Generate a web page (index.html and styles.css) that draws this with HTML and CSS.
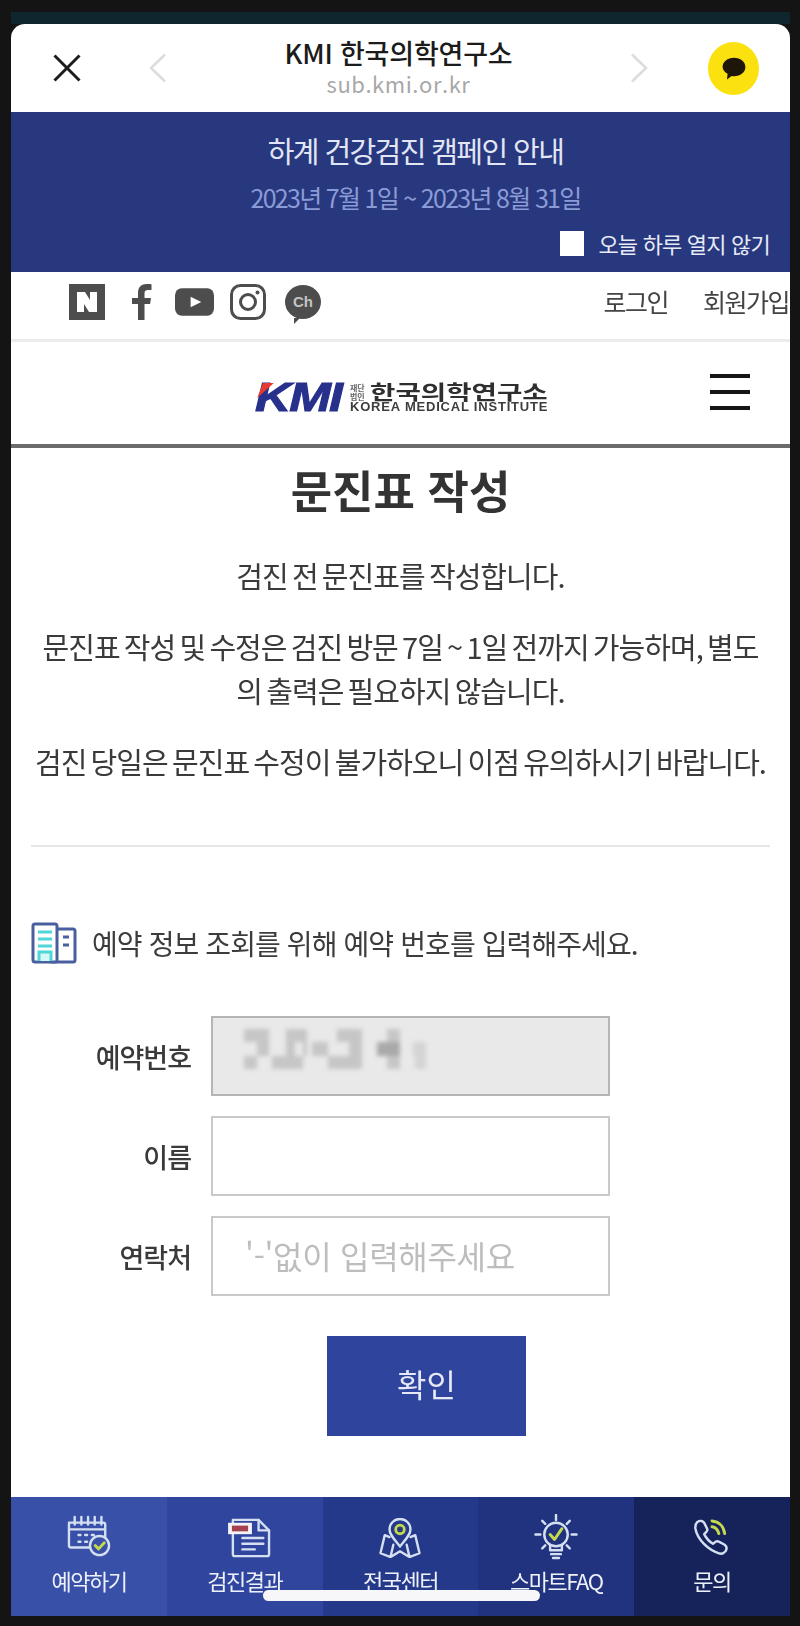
FILE: index.html
```html
<!DOCTYPE html>
<html lang="ko">
<head>
<meta charset="utf-8">
<title>문진표 작성</title>
<link rel="stylesheet" href="styles.css">
</head>
<body>
<div class="peek"></div>
<div class="sheet">
  <header class="browser">
    <svg class="ic-close" viewBox="0 0 28 28"><path d="M1.500 1.500 26.500 26.500M26.500 1.500 1.500 26.500"/></svg>
    <svg class="ic-chev" viewBox="0 0 18 30"><path d="M16 1.500 2 15l14 13.500"/></svg>
    <div class="browser-title">
      <div class="site">KMI 한국의학연구소</div>
      <div class="host">sub.kmi.or.kr</div>
    </div>
    <svg class="ic-chev" viewBox="0 0 18 30"><path d="M2 1.500 16 15 2 28.500"/></svg>
    <div class="kakao">
      <svg viewBox="0 0 24 24"><path d="M12 2.500c6 0 10.500 3.700 10.500 8.500S18 19.500 12 19.500c-.8 0-1.500 0-2.200-.2L5.500 22.500l.6-5.200C3.300 15.700 1.500 13.500 1.500 11 1.500 6.200 6 2.500 12 2.500Z"/></svg>
    </div>
  </header>

  <section class="notice">
    <div class="notice-title">하계 건강검진 캠페인 안내</div>
    <div class="notice-date">2023년 7월 1일 ~ 2023년 8월 31일</div>
    <label class="notice-skip"><span class="check"></span>오늘 하루 열지 않기</label>
  </section>

  <div class="util">
    <div class="socials">
      <svg class="s-n" viewBox="0 0 36 36"><rect width="36" height="36" fill="#4d4d4d"/><path d="M8 8h8l5 8V8h7v20h-8l-5-8v8H8Z" fill="#fff"/></svg>
      <svg class="s-f" viewBox="0 0 20 36"><path d="M6 36V20H0v-6h6V9c0-6 3.500-9 8.500-9 2.500 0 4.500.2 5 .3v5.700h-3.500c-2.800 0-3.500 1.300-3.500 3.400V14h6.500l-.9 6h-5.600v16Z" fill="#4d4d4d"/></svg>
      <svg class="s-y" viewBox="0 0 40 28"><rect width="40" height="28" rx="7" fill="#4d4d4d"/><path d="M16 8.500 27 14l-11 5.500Z" fill="#fff"/></svg>
      <svg class="s-i" viewBox="0 0 36 36"><rect x="1.500" y="1.500" width="33" height="33" rx="9" fill="none" stroke="#4d4d4d" stroke-width="3"/><circle cx="18" cy="18" r="7.500" fill="none" stroke="#4d4d4d" stroke-width="3"/><circle cx="27.500" cy="8.500" r="2" fill="#4d4d4d"/></svg>
      <div class="s-ch"><span>Ch</span></div>
    </div>
    <nav class="util-links"><span>로그인</span><span>회원가입</span></nav>
  </div>

  <div class="brand">
    <div class="logo">
      <div class="logo-mark"><span class="logo-kmi">KMI</span><svg viewBox="0 0 20 18"><path d="M7 0h13L0 18Z"/></svg></div>
      <div class="logo-text">
        <div class="logo-kr"><span class="logo-tiny">재단<br>법인</span><span class="logo-name">한국의학연구소</span></div>
        <div class="logo-en">KOREA MEDICAL INSTITUTE</div>
      </div>
    </div>
    <div class="burger"><i></i><i></i><i></i></div>
  </div>

  <main class="content">
    <h1>문진표 작성</h1>
    <p class="lead">검진 전 문진표를 작성합니다.</p>
    <p class="lead lead-gap">문진표 작성 및 수정은 검진 방문 7일 ~ 1일 전까지 가능하며, 별도<br>의 출력은 필요하지 않습니다.</p>
    <p class="lead lead-gap">검진 당일은 문진표 수정이 불가하오니 이점 유의하시기 바랍니다.</p>
    <hr>
    <div class="prompt">
      <svg viewBox="0 0 46 42"><rect x="19" y="7" width="25" height="33" rx="2" fill="#fff" stroke="#4a5f9e" stroke-width="3"/><rect x="2" y="2" width="24" height="38" rx="2" fill="#fff" stroke="#4a5f9e" stroke-width="3"/><path d="M7 10h14M7 17h14M7 24h14" stroke="#4fd6d6" stroke-width="3"/><path d="M8 39V30h12v9" fill="#d6f7f7" stroke="#4fd6d6" stroke-width="3"/><path d="M32 15h6M32 23h6" stroke="#4a5f9e" stroke-width="3"/></svg>
      <span>예약 정보 조회를 위해 예약 번호를 입력해주세요.</span>
    </div>
    <form class="form">
      <div class="row"><label>예약번호</label>
        <div class="field field-off">
          <svg class="mosaic" viewBox="0 0 184 40"><g fill="#c6c6c6"><rect x="0" y="0" width="25" height="13"/><rect x="42" y="0" width="21" height="13"/><rect x="93" y="0" width="25" height="13"/><rect x="143" y="0" width="13" height="13"/><rect x="13" y="13" width="12" height="14"/><rect x="42" y="13" width="9" height="14"/><rect x="59" y="13" width="4" height="14"/><rect x="68" y="13" width="16" height="14"/><rect x="105" y="13" width="13" height="14"/><rect x="133" y="13" width="23" height="14" fill="#a9a9a9"/><rect x="169" y="13" width="13" height="14" fill="#d4d4d4"/><rect x="0" y="27" width="13" height="13"/><rect x="28" y="27" width="31" height="13"/><rect x="84" y="27" width="34" height="13"/><rect x="143" y="27" width="13" height="13"/><rect x="171" y="27" width="11" height="13" fill="#d4d4d4"/></g></svg>
        </div>
      </div>
      <div class="row"><label>이름</label><div class="field"></div></div>
      <div class="row"><label>연락처</label><div class="field field-hint">'-'없이 입력해주세요</div></div>
      <button type="button" class="confirm">확인</button>
    </form>
  </main>

  <nav class="dock">
    <a class="dock-item d1">
      <svg viewBox="0 0 46 44"><path d="M2 8h36a2 2 0 0 1 2 2v22a2 2 0 0 1-2 2H4a2 2 0 0 1-2-2V10a2 2 0 0 1 2-2ZM2 15h38" class="ln"/><path d="M8 2v8M15 2v8M22 2v8M29 2v8M36 2v8" class="ln"/><path d="M12 21h2M19 21h2M26 21h2M12 28h2M19 28h2" class="ln"/><circle cx="34" cy="32" r="10" fill="#3850a8" stroke="#d5dff2" stroke-width="2.500"/><path d="m29.500 32 3.500 3.500 6-6.500" class="ok"/></svg>
      <span>예약하기</span>
    </a>
    <a class="dock-item d2">
      <svg viewBox="0 0 46 42"><path d="M5 2h27l11 11v25a2 2 0 0 1-2 2H7a2 2 0 0 1-2-2Z" class="ln"/><path d="M32 2v11h11M15 21h22M15 27h22M15 33h13" class="ln"/><rect x="0" y="5" width="25" height="12" fill="#f4f4f8"/><rect x="4" y="8" width="17" height="6" fill="#a5404f"/></svg>
      <span>검진결과</span>
    </a>
    <a class="dock-item d3">
      <svg viewBox="0 0 44 42"><path d="M22 30C15 21 11 17 11 12a11 11 0 0 1 22 0c0 5-4 9-11 18Z" class="ln"/><circle cx="22" cy="12" r="4.500" class="ok"/><path d="M11 20 6 18 1.500 37 12 41l10-6 10 6 10.500-4L38 18l-5 2M12 41l3-13M32 41l-3-13" class="ln"/></svg>
      <span>전국센터</span>
    </a>
    <a class="dock-item d4">
      <svg viewBox="0 0 44 48"><circle cx="22" cy="21" r="12" class="ln"/><path d="M16 32v5h12v-5M17 41h10M19 45h6M22 1v5M8 7l3 3M36 7l-3 3M1 21h5M38 21h5M8 35l3-3M36 35l-3-3" class="ln"/><path d="m16 21 4.500 5L28 15" class="ok"/></svg>
      <span>스마트FAQ</span>
    </a>
    <a class="dock-item d5">
      <svg viewBox="0 0 36 38"><path d="M3 3c3-2 6-1 7 1l3 6c.6 1.300 0 2.500-1 3.500l-2 2c2 4 5 7.500 9 10l2.500-2c1-.8 2.300-1 3.500-.3l6 3.300c2 1.500 2.500 4 1 6.500-1.500 2-3.500 3-6 2.500C14 32 3 21 1 10 .6 7 1 5 3 3Z" class="ln"/><path d="M18 2c7 .5 12 5.500 13 13M18 8c3.500.5 6 3 7 7" class="ok"/></svg>
      <span>문의</span>
    </a>
    <div class="home-bar"></div>
  </nav>
</div>
</body>
</html>
```
FILE: styles.css
```css
* { box-sizing: border-box; }
html, body { margin: 0; height: 100%; }
body {
  background: #141414;
  padding: 12px 10px 10px 11px;
  font-family: "Noto Sans CJK KR", "Noto Sans", sans-serif;
  color: #333;
  overflow: hidden;
}
.peek { height: 12px; background: #10262f; }
.sheet {
  height: 1592px;
  background: #fff;
  border-radius: 14px 14px 0 0;
  overflow: hidden;
  display: flex;
  flex-direction: column;
  filter: blur(0.7px);
}

/* in-app browser bar */
.browser {
  height: 88px;
  flex: none;
  display: flex;
  align-items: center;
  position: relative;
  padding: 0 31px 0 42px;
}
.ic-close { width: 28px; height: 28px; flex: none; margin-top: -1px; }
.ic-close path { fill: none; stroke: #1c1c1c; stroke-width: 3; }
.ic-chev { width: 18px; height: 30px; flex: none; }
.ic-chev path { fill: none; stroke: #dcdcdc; stroke-width: 2.500; }
.browser > .ic-chev:nth-of-type(2) { margin-left: 68px; }
.browser-title {
  flex: 1;
  text-align: center;
  margin-top: -3px;
}
.site { font-size: 27px; line-height: 33px; font-weight: 500; color: #1b1b1b; letter-spacing: -0.200px; white-space: nowrap; }
.host { font-size: 22px; line-height: 28px; color: #a8a8a8; letter-spacing: 0.550px; }
.kakao {
  width: 51px; height: 53px;
  border-radius: 50%;
  background: #fbe10f;
  margin-left: 60px;
  flex: none;
  display: flex;
  align-items: center;
  justify-content: center;
}
.kakao svg { width: 26px; height: 26px; fill: #1e1608; }

/* campaign notice */
.notice {
  height: 160px;
  flex: none;
  background: #27387f;
  text-align: center;
  padding-top: 16px;
  display: flex;
  flex-direction: column;
}
.notice-title { font-size: 29px; line-height: 44px; padding-left: 30px; color: #e2e6f4; letter-spacing: -1.600px; }
.notice-date { font-size: 25px; line-height: 36px; margin-top: 7px; padding-left: 30px; color: #8b9bd6; letter-spacing: -1.700px; }
.notice-skip {
  display: flex;
  justify-content: flex-end;
  align-items: center;
  gap: 14px;
  margin-top: 15px;
  padding-right: 20px;
  font-size: 22px;
  line-height: 26px;
  color: #e8ebf6;
  letter-spacing: -0.800px;
}
.check { width: 24px; height: 25px; background: #fff; flex: none; }

/* social + login */
.util {
  height: 70px;
  flex: none;
  border-bottom: 3px solid #ececec;
  display: flex;
  justify-content: space-between;
  align-items: center;
  padding-left: 58px;
}
.socials { display: flex; align-items: center; margin-top: -8px; }
.socials svg, .s-ch { flex: none; }
.s-n { width: 36px; height: 36px; }
.s-f { width: 20px; height: 36px; margin-left: 27px; }
.s-y { width: 39px; height: 28px; margin-left: 23px; }
.s-i { width: 36px; height: 36px; margin-left: 16px; }
.s-ch {
  width: 36px; height: 34px;
  margin-left: 19px;
  border-radius: 50%;
  background: #4d4d4d;
  color: #c4c4c4;
  font: 700 15px/34px "Liberation Sans", sans-serif;
  text-align: center;
  position: relative;
}
.s-ch::after {
  content: "";
  position: absolute;
  left: 9px; bottom: -5px;
  border-left: 6px solid #4d4d4d;
  border-right: 3px solid transparent;
  border-bottom: 6px solid transparent;
}
.util-links {
  display: flex;
  gap: 35px;
  margin-top: -10px;
  padding-right: 1px;
  font-size: 25px;
  color: #444;
  letter-spacing: -1.500px;
  white-space: nowrap;
}

/* logo row */
.brand {
  height: 106px;
  flex: none;
  border-bottom: 4px solid #6b6b6b;
  position: relative;
  display: flex;
  align-items: center;
  justify-content: flex-end;
  padding-right: 40px;
}
.logo {
  position: absolute;
  left: 244px;
  top: 40px;
  display: flex;
  gap: 5px;
  align-items: flex-start;
}
.logo-mark {
  position: relative;
  width: 90px;
  height: 30px;
  flex: none;
}
.logo-kmi {
  display: block;
  font: italic 700 40px/30px "Liberation Sans", sans-serif;
  color: #27318c;
  letter-spacing: -1.500px;
  transform: scaleX(1.250);
  transform-origin: left center;
  -webkit-text-stroke: 1px #27318c;
}
.logo-mark svg {
  position: absolute;
  left: 2px;
  top: 1px;
  width: 17px;
  height: 15px;
  fill: #e8392f;
}
.logo-text { width: 198px; display: flex; flex-direction: column; }
.logo-kr {
  display: flex;
  align-items: center;
  height: 19px;
  white-space: nowrap;
}
.logo-name {
  display: block;
  width: 178px;
  font-size: 20px;
  line-height: 19px;
  font-weight: 700;
  color: #2f2f2f;
  letter-spacing: 0;
  transform: scaleX(1.380);
  transform-origin: left center;
}
.logo-tiny { width: 20px; flex: none; font-size: 8px; line-height: 9px; font-weight: 700; color: #666; }
.logo-en {
  font: 700 13px/12px "Liberation Sans", sans-serif;
  color: #3d3d3d;
  letter-spacing: 0.800px;
  white-space: nowrap;
}
.burger { display: flex; flex-direction: column; gap: 12px; margin-top: -2px; }
.burger i { display: block; width: 40px; height: 4px; background: #161616; }

/* main */
.content { flex: 1; padding: 0 20px; min-height: 0; }
h1 {
  margin: 13px 0 0;
  font-size: 45px;
  line-height: 58px;
  font-weight: 700;
  text-align: center;
  color: #333;
  letter-spacing: 0;
}
.lead {
  margin: 34px 0 0;
  font-size: 29px;
  line-height: 44px;
  text-align: center;
  color: #3a3a3a;
  letter-spacing: -0.950px;
  word-spacing: -3px;
  white-space: nowrap;
}
.lead-gap { margin-top: 27px; }
hr {
  border: 0;
  height: 2px;
  background: #e6e6e6;
  margin: 62px 0 0;
}
.prompt {
  display: flex;
  align-items: center;
  gap: 15px;
  margin-top: 75px;
  font-size: 28px;
  line-height: 42px;
  color: #3c3c3c;
  letter-spacing: -0.900px;
  white-space: nowrap;
}
.prompt svg { width: 46px; height: 42px; flex: none; }
.form { margin-top: 52px; display: flex; flex-direction: column; gap: 20px; }
.row { display: flex; align-items: center; gap: 20px; }
.row label {
  width: 160px;
  text-align: right;
  font-size: 27px;
  font-weight: 500;
  color: #3a3a3a;
  letter-spacing: -1px;
}
.field {
  width: 399px;
  height: 80px;
  border: 2px solid #c9c9c9;
  background: #fff;
}
.field-off { background: #e9e9e9; border-color: #b5b5b5; position: relative; }
.mosaic { position: absolute; left: 31px; top: 11px; width: 184px; height: 40px; filter: blur(2px); }
.field-hint {
  font-size: 32px;
  line-height: 74px;
  padding-left: 32px;
  color: #bdbdbd;
  letter-spacing: -0.300px;
  white-space: nowrap;
}
.confirm {
  align-self: flex-start;
  margin: 20px 0 0 296px;
  width: 199px;
  height: 100px;
  padding: 0 0 6px;
  border: 0;
  background: #2f459d;
  color: #e6e9f5;
  font: 400 32px "Noto Sans CJK KR", sans-serif;
}

/* bottom dock */
.dock {
  height: 119px;
  flex: none;
  display: grid;
  grid-template-columns: repeat(5, 1fr);
  position: relative;
}
.dock-item {
  display: flex;
  flex-direction: column;
  align-items: center;
  color: #eef1fa;
  font-size: 22px;
  letter-spacing: -1.500px;
  padding-top: 18px;
}
.dock-item svg { flex: none; }
.dock-item span { line-height: 34px; }
.d1 { background: #3850a8; }
.d1 svg { width: 46px; height: 42px; margin-bottom: 6px; }
.d2 { background: #30469e; }
.d2 svg { width: 46px; height: 40px; margin: 3px 0 5px 10px; }
.d3 { background: #25398a; }
.d3 svg { width: 44px; height: 40px; margin: 3px 0 5px; }
.d4 { background: #21327e; }
.d4 svg { width: 44px; height: 47px; margin: -1px 0 2px; }
.d5 { background: #16235a; }
.d5 svg { width: 36px; height: 37px; margin: 4px 0 7px; }
.ln { fill: none; stroke: #d5dff2; stroke-width: 2.500; stroke-linecap: round; stroke-linejoin: round; }
.ok { fill: none; stroke: #c3da4e; stroke-width: 3; stroke-linecap: round; stroke-linejoin: round; }
.home-bar {
  position: absolute;
  left: 252px;
  top: 93px;
  width: 277px;
  height: 11px;
  border-radius: 6px;
  background: #f7f7fa;
}
```
